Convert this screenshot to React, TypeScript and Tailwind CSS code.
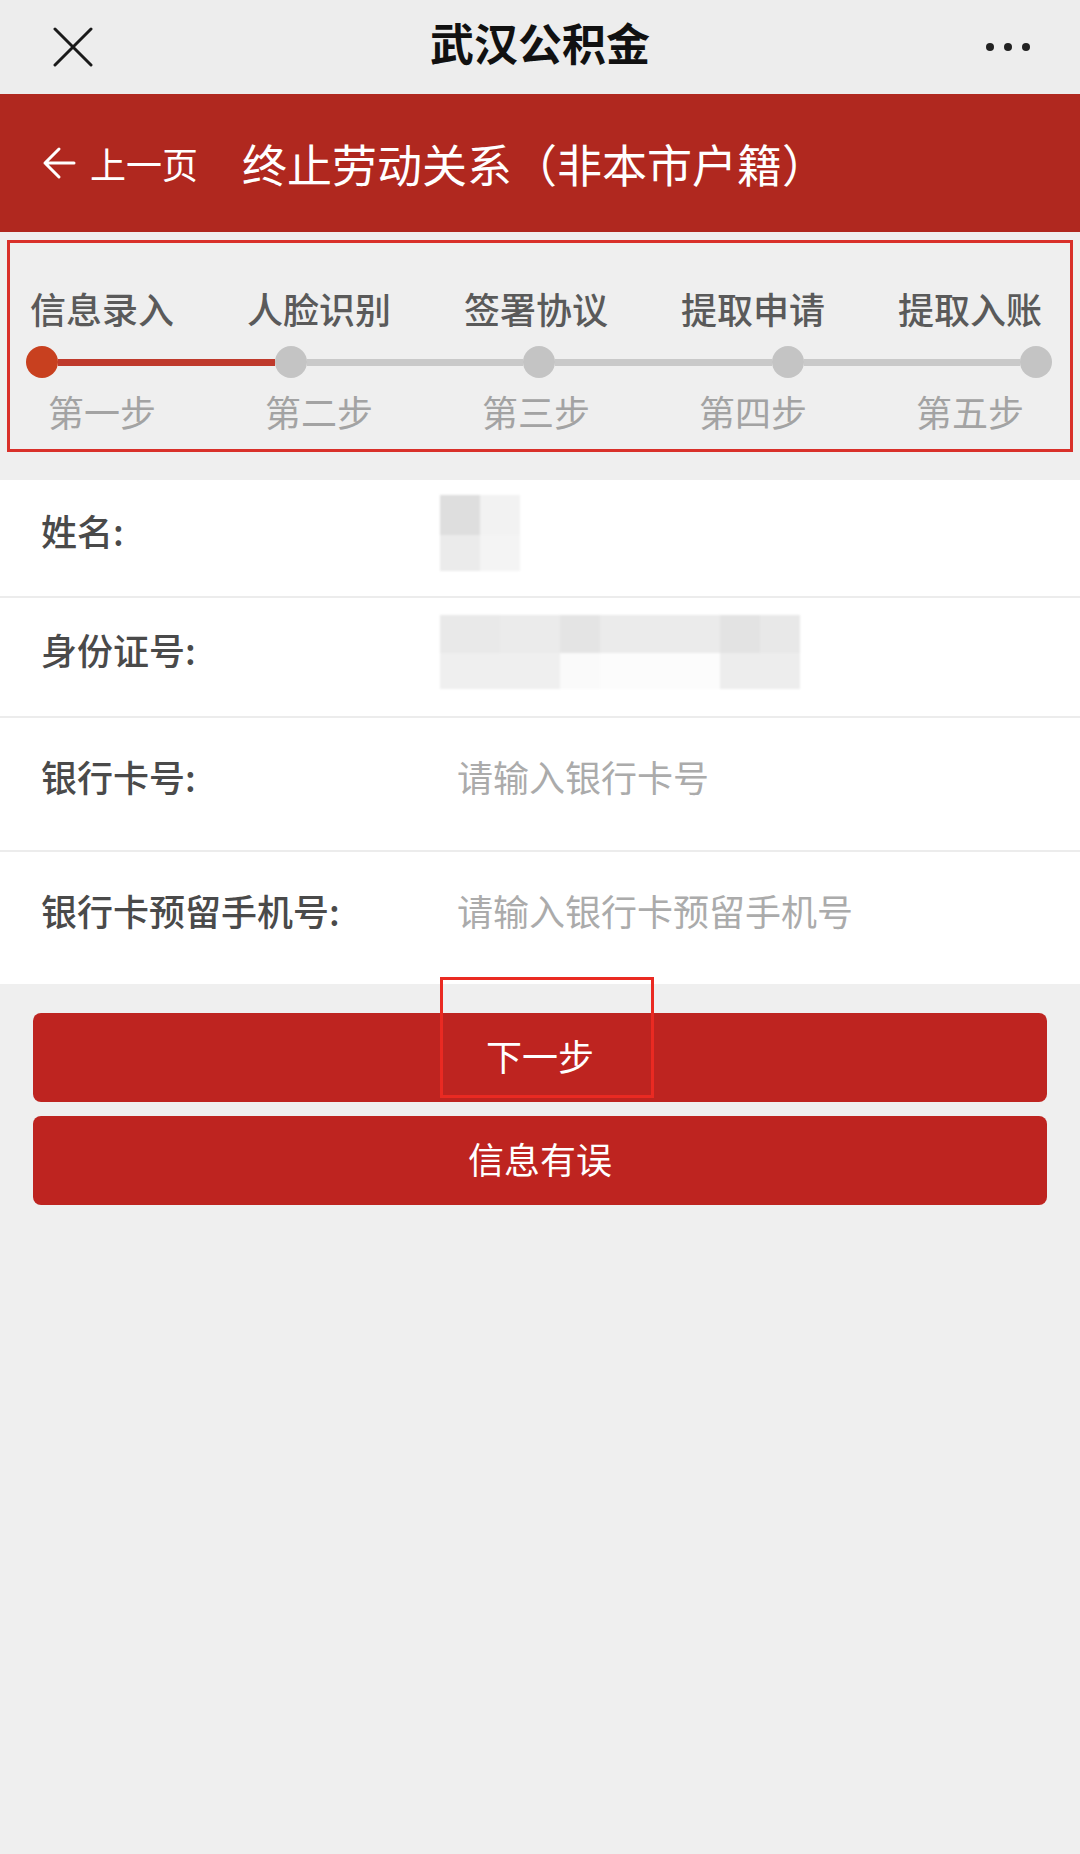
import { type ReactNode } from "react";

const STEPS = [
  { title: "信息录入", sub: "第一步" },
  { title: "人脸识别", sub: "第二步" },
  { title: "签署协议", sub: "第三步" },
  { title: "提取申请", sub: "第四步" },
  { title: "提取入账", sub: "第五步" },
] as const;

const FONT = '"Noto Sans CJK SC", "Noto Sans", sans-serif';

function CloseIcon(): ReactNode {
  return (
    <svg width="40" height="40" viewBox="0 0 40 40" aria-hidden>
      <path d="M2 2 L38 38 M38 2 L2 38" stroke="#1a1a1a" strokeWidth="3" strokeLinecap="round" />
    </svg>
  );
}

function BackArrow(): ReactNode {
  return (
    <svg width="34" height="34" viewBox="0 0 34 34" aria-hidden>
      <path d="M17 3 L3 17 L17 31 M3 17 H32" stroke="#fff" strokeWidth="3" fill="none" strokeLinecap="round" strokeLinejoin="round" />
    </svg>
  );
}

function Progress(): ReactNode {
  return (
    <div className="flex items-center pl-[16px] pr-[18px] mt-[20px]">
      {STEPS.map((s, i) => (
        <div key={s.sub} className={i < STEPS.length - 1 ? "flex flex-1 items-center" : "flex items-center"}>
          <span
            className={
              i === 0
                ? "w-[32px] h-[32px] shrink-0 rounded-full bg-[#c8401f]"
                : "w-[32px] h-[32px] shrink-0 rounded-full bg-[#c4c4c4]"
            }
          />
          {i < STEPS.length - 1 && (
            <span className={i === 0 ? "flex-1 h-[7px] bg-[#bf3a2c]" : "flex-1 h-[7px] bg-[#c9c9c9]"} />
          )}
        </div>
      ))}
    </div>
  );
}

function Row({ label, height, children }: { label: string; height: string; children?: ReactNode }): ReactNode {
  return (
    <div className={`flex items-center bg-white pb-[16px] ${height}`}>
      <span className="w-[457px] shrink-0 pl-[41px] text-[36px] leading-none font-medium text-[#4a4a4a]">
        {label}
      </span>
      {children}
    </div>
  );
}

export default function App(): ReactNode {
  return (
    <div className="w-[1080px] min-h-[1854px] bg-[#efefef]" style={{ fontFamily: FONT }}>
      <header className="relative h-[94px] bg-[#ededed] flex items-center justify-between pl-[53px] pr-[50px]">
        <CloseIcon />
        <h1 className="absolute left-0 right-0 top-[20px] text-center text-[44px] leading-none font-bold text-[#111] pointer-events-none">
          武汉公积金
        </h1>
        <div className="flex items-center gap-[10px]">
          <span className="w-[8px] h-[8px] rounded-full bg-[#222]" />
          <span className="w-[8px] h-[8px] rounded-full bg-[#222]" />
          <span className="w-[8px] h-[8px] rounded-full bg-[#222]" />
        </div>
      </header>

      <div className="h-[138px] bg-[#b0281f] flex items-center pl-[42px] text-white">
        <BackArrow />
        <span className="ml-[14px] text-[36px] leading-none">上一页</span>
        <span className="ml-[44px] text-[45px] leading-none">终止劳动关系（非本市户籍）</span>
      </div>

      <section className="pt-[8px] pb-[28px] px-[7px]">
        <div className="border-[3px] border-[#d9302a] pt-[47px] pb-[20px]">
          <div className="flex justify-between pl-[20px] pr-[28px]">
            {STEPS.map((s) => (
              <span key={s.title} className="w-[144px] text-center text-[36px] leading-none font-medium text-[#5a5a5a]">
                {s.title}
              </span>
            ))}
          </div>
          <Progress />
          <div className="flex justify-between pl-[20px] pr-[28px] mt-[15px]">
            {STEPS.map((s) => (
              <span key={s.sub} className="w-[144px] text-center text-[36px] leading-none text-[#a3a3a3]">
                {s.sub}
              </span>
            ))}
          </div>
        </div>
      </section>

      <div className="flex flex-col gap-[2px] bg-[#ececec]">
        <Row label="姓名:" height="h-[116px]">
          <div className="flex flex-col -ml-[17px] mt-[6px] blur-[1px]">
            <div className="flex">
              <span className="w-[40px] h-[40px] bg-[#dedede]" />
              <span className="w-[40px] h-[40px] bg-[#f2f2f2]" />
            </div>
            <div className="flex">
              <span className="w-[40px] h-[36px] bg-[#ebebeb]" />
              <span className="w-[40px] h-[36px] bg-[#f4f4f4]" />
            </div>
          </div>
        </Row>
        <Row label="身份证号:" height="h-[118px]">
          <div className="flex flex-col -ml-[17px] mt-[6px] blur-[1px]">
            <div className="flex">
              <span className="w-[60px] h-[38px] bg-[#e9e9e9]" />
              <span className="w-[60px] h-[38px] bg-[#ebebeb]" />
              <span className="w-[40px] h-[38px] bg-[#e4e4e4]" />
              <span className="w-[120px] h-[38px] bg-[#ebebeb]" />
              <span className="w-[40px] h-[38px] bg-[#e3e3e3]" />
              <span className="w-[40px] h-[38px] bg-[#e8e8e8]" />
            </div>
            <div className="flex">
              <span className="w-[120px] h-[36px] bg-[#efefef]" />
              <span className="w-[40px] h-[36px] bg-[#fafafa]" />
              <span className="w-[120px] h-[36px] bg-[#fcfcfc]" />
              <span className="w-[80px] h-[36px] bg-[#ededed]" />
            </div>
          </div>
        </Row>
        <Row label="银行卡号:" height="h-[132px]">
          <span className="text-[36px] leading-none text-[#ababab]">请输入银行卡号</span>
        </Row>
        <Row label="银行卡预留手机号:" height="h-[132px]">
          <span className="text-[36px] leading-none text-[#ababab]">请输入银行卡预留手机号</span>
        </Row>
      </div>

      <div className="relative flex flex-col gap-[14px] px-[33px] pt-[29px]">
        <button className="h-[89px] rounded-[8px] bg-[#be2420] text-white text-[36px] leading-none pb-[6px]">
          下一步
        </button>
        <button className="h-[89px] rounded-[8px] bg-[#be2420] text-white text-[36px] leading-none pb-[6px]">
          信息有误
        </button>
        <div
          aria-hidden
          className="absolute left-[440px] top-[-7px] w-[214px] h-[121px] border-[3px] border-[#ea2a22] pointer-events-none"
        />
      </div>
    </div>
  );
}
